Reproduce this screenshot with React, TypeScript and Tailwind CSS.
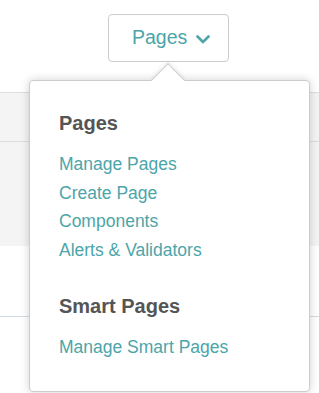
import React from "react";

const teal = "text-[#4ca5a9]";

export default function App() {
  const pageLinks = ["Manage Pages", "Create Page", "Components", "Alerts & Validators"];
  return (
    <div className="relative w-[319px] h-[393px] overflow-hidden bg-white font-['Liberation_Sans',Arial,sans-serif]">
      {/* background page */}
      <div className="h-[92px] flex items-start pt-[14px] pl-[108px]">
        <button
          className={`w-[121px] h-[48px] border border-[#cccccc] rounded-[4px] bg-white flex items-center pl-[23px] pb-[3px] text-[19.5px] leading-[20px] ${teal}`}
        >
          <span>Pages</span>
          <svg className="ml-[9px] mt-[5px]" width="14" height="9" viewBox="0 0 14 9" fill="none">
            <path d="M1.5 1.5 L7 7 L12.5 1.5" stroke="#4ca5a9" strokeWidth="2.6" strokeLinecap="round" strokeLinejoin="round" />
          </svg>
        </button>
      </div>
      <div className="h-[49px] border-t border-[#dddddd] bg-[#f4f4f4]" />
      <div className="h-[105px] border-t border-[#dddddd] bg-[#f4f4f4]" />
      <div className="h-[70px] bg-white" />
      <div className="h-[77px] border-t border-[#d3dbe2] bg-white" />

      {/* dropdown panel */}
      <div className="absolute left-[29px] top-[80px] w-[281px] h-[312px] border border-[#cccccc] rounded-[4px] bg-white shadow-[0_0_10px_rgba(0,0,0,0.18)] px-[29px] pt-[30px]">
        <div className="absolute left-[126px] top-[-13px] w-[24px] h-[24px] rotate-45 bg-white border-t border-l border-[#cccccc] shadow-[-2px_-2px_4px_rgba(0,0,0,0.06)]" />
        <div className="relative">
          <div className="text-[20px] leading-[24px] font-bold text-[#555555]">Pages</div>
          <ul className="mt-[15px]">
            {pageLinks.map((l) => (
              <li key={l} className={`text-[17.5px] leading-[28.5px] ${teal}`}>{l}</li>
            ))}
          </ul>
          <div className="mt-[30px] text-[20px] leading-[24px] font-bold text-[#555555]">Smart Pages</div>
          <ul className="mt-[15px]">
            <li className={`text-[17.5px] leading-[28.5px] ${teal}`}>Manage Smart Pages</li>
          </ul>
        </div>
      </div>
    </div>
  );
}
